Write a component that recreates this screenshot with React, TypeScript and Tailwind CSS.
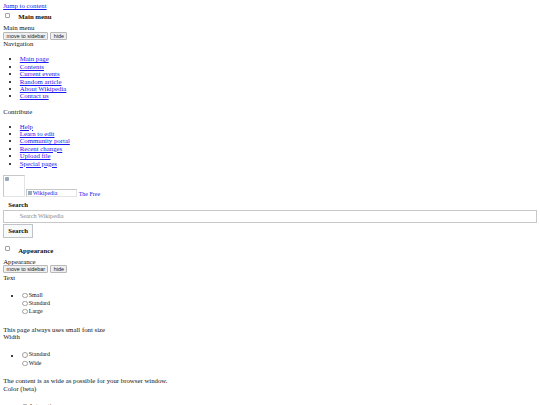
const mainNav = ["Main page", "Contents", "Current events", "Random article", "About Wikipedia", "Contact us"];
const contribute = ["Help", "Learn to edit", "Community portal", "Recent changes", "Upload file", "Special pages"];

function Box() {
  return <span className="inline-block w-[5px] h-[5px] border border-[#a0a0a0] rounded-[1px] bg-white" />;
}

function Radio({ label }: { label: string }) {
  return (
    <div className="flex items-center h-[8.3px]">
      <span className="inline-block w-[5.4px] h-[5.4px] rounded-full border border-[#a0a0a0] bg-white mr-[1.2px]" />
      <span className="text-[6px] leading-[7px]">{label}</span>
    </div>
  );
}

function Buttons() {
  return (
    <div className="flex gap-[2px] h-[8.6px] items-start">
      <button className="h-[8px] px-[2.4px] border border-[#b8b8b8] rounded-[1px] bg-[#efefef] text-[5.4px] leading-[6px] text-[#222]" style={{ fontFamily: '"Liberation Sans", Arial, sans-serif' }}>
        move to sidebar
      </button>
      <button className="h-[8px] px-[2.4px] border border-[#b8b8b8] rounded-[1px] bg-[#efefef] text-[5.4px] leading-[6px] text-[#222]" style={{ fontFamily: '"Liberation Sans", Arial, sans-serif' }}>
        hide
      </button>
    </div>
  );
}

function MenuHeader({ label }: { label: string }) {
  return (
    <div className="flex h-[14px] items-start">
      <span className="mt-[1.5px] ml-[2px]"><Box /></span>
      <span className="ml-[8px] mt-[3px] font-bold">{label}</span>
    </div>
  );
}

function LinkList({ items }: { items: string[] }) {
  return (
    <ul className="list-disc pl-[16.6px] my-[7.6px]">
      {items.map((t) => (
        <li key={t} className="h-[7.45px] marker:text-black">
          <a className="text-[#1a1aee] underline decoration-[0.5px]">{t}</a>
        </li>
      ))}
    </ul>
  );
}

export default function App() {
  return (
    <div
      className="w-[540px] h-[405px] overflow-hidden bg-white text-[#111] px-[3.2px] pt-[2.3px] text-[6.8px] leading-[7.4px]"
      style={{ fontFamily: '"Liberation Serif", "Times New Roman", serif' }}
    >
      <a className="text-[#1a1aee] underline decoration-[0.5px] block h-[8px]">Jump to content</a>
      <MenuHeader label="Main menu" />
      <div>Main menu</div>
      <Buttons />
      <div>Navigation</div>
      <LinkList items={mainNav} />
      <div>Contribute</div>
      <LinkList items={contribute} />

      <div className="flex items-end h-[22px] mt-[7.4px]">
        <div className="w-[22px] h-[21.5px] border border-[#c8c8c8] border-r-[#e4e4e4] border-b-[#e4e4e4] relative">
          <span className="absolute left-[1px] top-[1px] w-[4px] h-[4px] bg-[#9ab] rounded-[1px]" />
        </div>
        <div className="ml-[1px] w-[51px] h-[8px] border border-[#c8c8c8] border-r-[#e4e4e4] border-b-[#e4e4e4] flex items-center text-[#1a1aee] text-[6px] leading-[6px] pl-[1px] overflow-hidden">
          <span className="inline-block w-[4px] h-[4px] bg-[#9ab] mr-[0.5px]" />Wikipedia
        </div>
        <span className="ml-[1.5px] text-[#1a1aee] text-[6px] leading-[6px] mb-[-0.5px]">The Free</span>
      </div>

      <div className="pl-[5px] mt-[4px] font-bold">Search</div>
      <div className="mt-[1.5px] h-[13px] border border-[#c8c8c8] flex items-center pl-[15.5px] text-[#8a8a8a] text-[6.2px]">
        Search Wikipedia
      </div>
      <button className="mt-[1px] w-[30px] h-[14px] border border-[#c0c4c8] bg-[#f8f9fa] font-bold text-[6.8px] text-[#111]" style={{ fontFamily: '"Liberation Serif", "Times New Roman", serif' }}>
        Search
      </button>

      <div className="mt-[6px]">
        <MenuHeader label="Appearance" />
      </div>
      <div>Appearance</div>
      <Buttons />
      <div>Text</div>
      <ul className="list-disc pl-[19px] my-[10px]">
        <li className="marker:text-black">
          <Radio label="Small" />
          <Radio label="Standard" />
          <Radio label="Large" />
        </li>
      </ul>
      <div>This page always uses small font size</div>
      <div>Width</div>
      <ul className="list-disc pl-[19px] my-[10px]">
        <li className="marker:text-black">
          <Radio label="Standard" />
          <Radio label="Wide" />
        </li>
      </ul>
      <div>The content is as wide as possible for your browser window.</div>
      <div>Color (beta)</div>
      <ul className="list-disc pl-[19px] my-[10px]">
        <li className="marker:text-black">
          <Radio label="Automatic" />
        </li>
      </ul>
    </div>
  );
}
